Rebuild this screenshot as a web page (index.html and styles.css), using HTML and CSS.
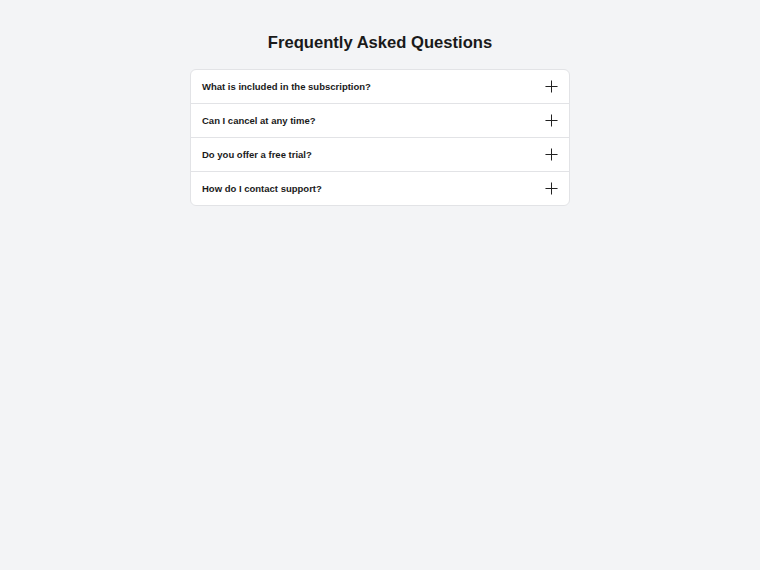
FILE: index.html
```html
<!DOCTYPE html>
<html>
    <head>
        <meta charset="utf-8">
        <title>FAQ</title>
        <link rel="stylesheet" href="styles.css">
    </head>
    <body>
        <div class="faq">
            <h1 class="faq-title">Frequently Asked Questions</h1>
            <div class="faq-list">
                <div class="faq-item">
                    <span class="faq-q">What is included in the subscription?</span>
                    <svg class="faq-icon" viewBox="0 0 14 14"><path d="M7 0.5v13M0.5 7h13"/></svg>
                </div>
                <div class="faq-item">
                    <span class="faq-q">Can I cancel at any time?</span>
                    <svg class="faq-icon" viewBox="0 0 14 14"><path d="M7 0.5v13M0.5 7h13"/></svg>
                </div>
                <div class="faq-item">
                    <span class="faq-q">Do you offer a free trial?</span>
                    <svg class="faq-icon" viewBox="0 0 14 14"><path d="M7 0.5v13M0.5 7h13"/></svg>
                </div>
                <div class="faq-item">
                    <span class="faq-q">How do I contact support?</span>
                    <svg class="faq-icon" viewBox="0 0 14 14"><path d="M7 0.5v13M0.5 7h13"/></svg>
                </div>
            </div>
        </div>
    </body>
</html>
```

FILE: styles.css
```css
body{
    margin: 0;
    background: #f3f4f6;
    font-family: "Liberation Sans", Arial, sans-serif;
    color: #111;
}
.faq{
    width: 380px;
    margin: 0 auto;
    padding-top: 32px;
}
.faq-title{
    margin: 0 0 15px;
    font-size: 16.6px;
    line-height: 22px;
    text-align: center;
    font-weight: bold;
    color: #1a1a1a;
}
.faq-list{
    background: #fff;
    border: 1px solid #e2e3e6;
    border-radius: 6px;
    overflow: hidden;
}
.faq-item{
    display: flex;
    align-items: center;
    justify-content: space-between;
    height: 33px;
    padding: 0 11px;
    border-top: 1px solid #e2e3e6;
}
.faq-item:first-child{
    border-top: 0;
}
.faq-q{
    font-size: 9.5px;
    font-weight: bold;
    color: #1a1a1a;
}
.faq-icon{
    width: 13px;
    height: 13px;
    fill: none;
    stroke: #222;
    stroke-width: 1.1;
}
```
